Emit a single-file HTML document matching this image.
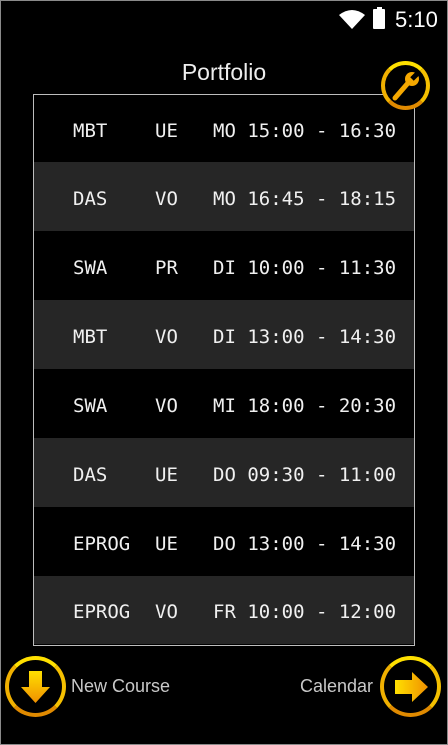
<!DOCTYPE html>
<html><head><style>
html,body{margin:0;padding:0;background:#000;}
body{width:448px;height:745px;position:relative;overflow:hidden;font-family:"Liberation Sans",sans-serif;}
.frame{position:absolute;left:0;top:0;width:446px;height:743px;border:1px solid #8a8a8a;}
.tbl{position:absolute;left:33px;top:94px;width:380px;height:550px;border:1px solid #bdbdbd;}
.row{position:absolute;left:34px;width:380px;height:69px;font-family:"DejaVu Sans Mono",monospace;font-size:19px;color:#f0f0f0;}
.row span{position:absolute;top:50%;transform:translateY(-42%);}
.alt{background:#262626;}
.c1{left:39px}.c2{left:121px}.c3{left:179px}
.title{position:absolute;left:0;width:448px;top:59px;text-align:center;color:#eee;font-size:23px;}
.lbl{position:absolute;top:676px;color:#c8c8c8;font-size:18px;}
.circ{position:absolute;border-radius:50%;border:4px solid;border-color:#ffe000 #f5c000 #e08a00 #f0b000;box-sizing:border-box;}
</style></head><body>
<div class="frame"></div>
<svg style="position:absolute;left:338px;top:8px" width="28" height="22" viewBox="0 0 28 22"><path d="M1 7 Q14 -3 27 7 L14 21 Z" fill="#fff"/></svg>
<div style="position:absolute;left:373px;top:9px;width:12px;height:20px;background:#fff;border-radius:1px"></div>
<div style="position:absolute;left:377px;top:7px;width:5px;height:3px;background:#fff"></div>
<div style="position:absolute;left:395px;top:7px;color:#fff;font-size:22px">5:10</div>
<div class="title">Portfolio</div>
<div class="tbl"></div>
<div class="row" style="top:95px;height:67px"><span class="c1">MBT</span><span class="c2">UE</span><span class="c3">MO 15:00 - 16:30</span></div>
<div class="row alt" style="top:162px"><span class="c1">DAS</span><span class="c2">VO</span><span class="c3">MO 16:45 - 18:15</span></div>
<div class="row" style="top:231px"><span class="c1">SWA</span><span class="c2">PR</span><span class="c3">DI 10:00 - 11:30</span></div>
<div class="row alt" style="top:300px"><span class="c1">MBT</span><span class="c2">VO</span><span class="c3">DI 13:00 - 14:30</span></div>
<div class="row" style="top:369px"><span class="c1">SWA</span><span class="c2">VO</span><span class="c3">MI 18:00 - 20:30</span></div>
<div class="row alt" style="top:438px"><span class="c1">DAS</span><span class="c2">UE</span><span class="c3">DO 09:30 - 11:00</span></div>
<div class="row" style="top:507px"><span class="c1">EPROG</span><span class="c2">UE</span><span class="c3">DO 13:00 - 14:30</span></div>
<div class="row alt" style="top:576px;height:68px"><span class="c1">EPROG</span><span class="c2">VO</span><span class="c3">FR 10:00 - 12:00</span></div>
<div class="circ" style="left:381px;top:61px;width:49px;height:49px;background:#000"></div>
<svg style="position:absolute;left:381px;top:61px" width="49" height="49" viewBox="0 0 49 49"><path d="M14 37 L27 22" stroke="#f5a800" stroke-width="5" stroke-linecap="round"/><circle cx="31" cy="18" r="7" fill="#f5a800"/><path d="M31 18 L38 11" stroke="#000" stroke-width="5"/></svg>
<div class="circ" style="left:5px;top:656px;width:61px;height:61px;background:#000"></div>
<svg style="position:absolute;left:5px;top:656px" width="61" height="61" viewBox="0 0 61 61"><defs><linearGradient id="g" x1="0" y1="0" x2="0" y2="1"><stop offset="0" stop-color="#ffe000"/><stop offset="1" stop-color="#f09000"/></linearGradient><linearGradient id="h" x1="0" y1="0" x2="1" y2="0"><stop offset="0" stop-color="#ffe000"/><stop offset="1" stop-color="#f09000"/></linearGradient></defs><path d="M24 15 H37 V31 H45 L30.5 47 L16 31 H24 Z" fill="url(#g)"/></svg>
<div class="lbl" style="left:71px">New Course</div>
<div class="lbl" style="left:300px">Calendar</div>
<div class="circ" style="left:380px;top:656px;width:61px;height:61px;background:#000"></div>
<svg style="position:absolute;left:380px;top:656px" width="61" height="61" viewBox="0 0 61 61"><path d="M15 24 H32 V16 L48 31 L32 46 V38 H15 Z" fill="url(#h)"/></svg>
</body></html>
